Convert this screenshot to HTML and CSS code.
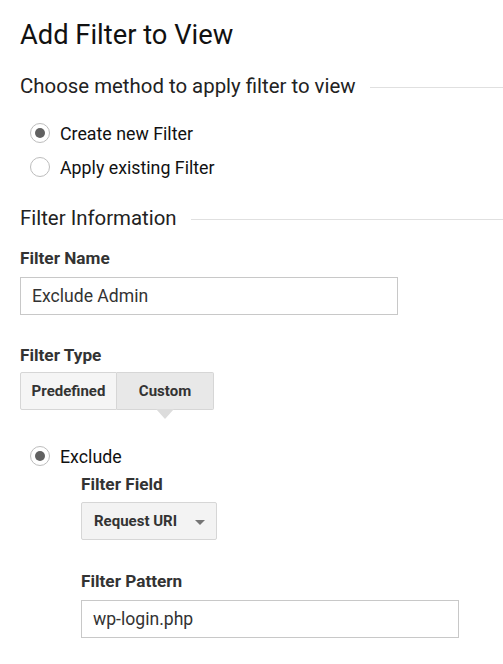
FILE: index.html
```html
<!DOCTYPE html>
<html>
<head>
<meta charset="utf-8">
<link rel="stylesheet" href="styles.css">
</head>
<body>
<div class="page">
  <h1 class="title">Add Filter to View</h1>

  <div class="section-head"><span>Choose method to apply filter to view</span><div class="rule"></div></div>
  <div class="radios">
    <div class="radio-row"><span class="radio checked"></span><span>Create new Filter</span></div>
    <div class="radio-row"><span class="radio"></span><span>Apply existing Filter</span></div>
  </div>

  <div class="section-head second"><span>Filter Information</span><div class="rule"></div></div>

  <div class="label name-label">Filter Name</div>
  <div class="input wide">Exclude Admin</div>

  <div class="label type-label">Filter Type</div>
  <div class="toggle">
    <div class="seg">Predefined</div>
    <div class="seg active">Custom</div>
  </div>

  <div class="radio-row exclude"><span class="radio checked"></span><span>Exclude</span></div>
  <div class="indent">
    <div class="label">Filter Field</div>
    <div class="select"><span>Request URI</span><span class="caret"></span></div>
    <div class="label pattern-label">Filter Pattern</div>
    <div class="input wide">wp-login.php</div>
  </div>
</div>
</body>
</html>
```
FILE: styles.css
```css
html, body {
  margin: 0;
  padding: 0;
  background: #fff;
}
body {
  font-family: Roboto, "Liberation Sans", sans-serif;
  color: #222;
}
.page {
  padding: 20px 0 0 20px;
}
.title {
  margin: 0;
  font-size: 27.3px;
  font-weight: 400;
  line-height: 30px;
  color: #111;
}
.section-head {
  display: flex;
  align-items: center;
  margin-top: 24px;
  font-size: 20.4px;
  line-height: 24px;
  color: #222;
}
.section-head .rule {
  flex: 1;
  height: 1px;
  background: #e0e0e0;
  margin-left: 14px;
  margin-top: 2px;
}
.section-head.second {
  margin-top: 22px;
}
.radios {
  margin-top: 18px;
  margin-left: 10px;
}
.radio-row {
  display: flex;
  align-items: center;
  height: 34px;
  font-size: 17.8px;
  color: #111;
}
.radio {
  box-sizing: border-box;
  width: 20px;
  height: 20px;
  border: 1px solid #bdbdbd;
  border-radius: 50%;
  margin-right: 10px;
  display: flex;
  align-items: center;
  justify-content: center;
  background: #fff;
}
.radio.checked::after {
  content: "";
  width: 10px;
  height: 10px;
  border-radius: 50%;
  background: #616161;
}
.label {
  font-weight: 700;
  font-size: 17.2px;
  line-height: 20px;
  color: #333;
  margin-top: 17px;
}
.name-label {
  margin-top: 18px;
}
.input {
  box-sizing: border-box;
  height: 38px;
  border: 1px solid #c8c8c8;
  margin-top: 9px;
  padding-left: 11px;
  display: flex;
  align-items: center;
  font-size: 17.6px;
  color: #333;
}
.input.wide {
  width: 378px;
}
.type-label {
  margin-top: 30px;
}
.toggle {
  display: flex;
  margin-top: 7px;
  width: 194px;
  height: 38px;
}
.seg {
  box-sizing: border-box;
  height: 38px;
  display: flex;
  align-items: center;
  justify-content: center;
  font-weight: 700;
  font-size: 15px;
  color: #333;
  border: 1px solid #d6d6d6;
  background: #f5f5f5;
}
.seg:first-child {
  width: 97px;
  border-radius: 2px 0 0 2px;
}
.seg.active {
  width: 97px;
  border-left: none;
  background: #e8e8e8;
  border-radius: 0 2px 2px 0;
  position: relative;
}
.seg.active::after {
  content: "";
  position: absolute;
  left: 50%;
  bottom: -10px;
  margin-left: -9px;
  border-left: 9px solid transparent;
  border-right: 9px solid transparent;
  border-top: 10px solid #dcdcdc;
}
.exclude {
  margin-top: 29px;
  margin-left: 10px;
}
.indent {
  margin-left: 61px;
}
.indent .label:first-child {
  margin-top: 1px;
}
.select {
  box-sizing: border-box;
  width: 136px;
  height: 38px;
  margin-top: 8px;
  border: 1px solid #d6d6d6;
  border-radius: 2px;
  background: #f3f3f3;
  display: flex;
  align-items: center;
  justify-content: space-between;
  padding: 0 11px 0 12px;
  font-weight: 700;
  font-size: 15px;
  color: #333;
}
.caret {
  width: 0;
  height: 0;
  border-left: 5px solid transparent;
  border-right: 5px solid transparent;
  border-top: 5px solid #757575;
  margin-top: 2px;
}
.pattern-label {
  margin-top: 31px;
}
```
